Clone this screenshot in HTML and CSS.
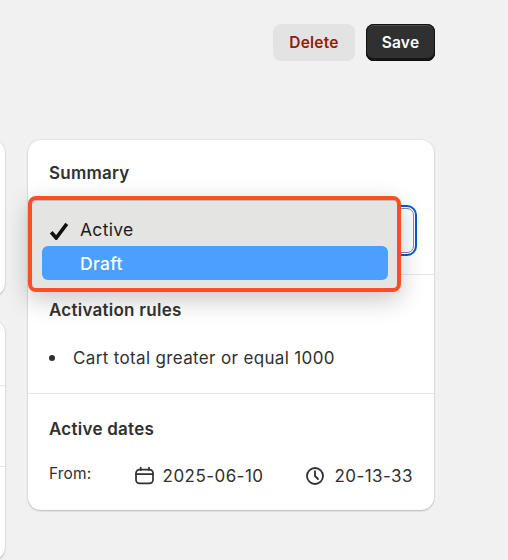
FILE: index.html
```html
<!DOCTYPE html>
<html lang="en">

<head>
  <meta charset="UTF-8">
  <meta name="viewport" content="width=device-width, initial-scale=1.0">
  <title>Discount</title>
  <link rel="stylesheet" href="styles.css">
</head>

<body>

  <div class="actions">
    <button class="btn btn-delete">Delete</button>
    <button class="btn btn-save">Save</button>
  </div>

  <div class="columns">
    <div class="left-col">
      <div class="card left-top"></div>
      <div class="card left-bottom">
        <div class="left-row"></div>
        <div class="left-row"></div>
      </div>
    </div>

    <div class="card summary">
      <div class="section section-status">
        <h2 class="title">Summary</h2>
        <div class="select-ring"></div>

        <!-- open status menu -->
        <div class="menu">
          <div class="menu-item">
            <svg class="check" width="20" height="18" viewBox="0 0 20 18">
              <path d="M2.2 10.2 L7.2 16 L17.8 1.8" fill="none" stroke="#111" stroke-width="3.6" />
            </svg>
            Active
          </div>
          <div class="menu-item menu-item-on">Draft</div>
        </div>
      </div>

      <div class="section section-rules">
        <h2 class="title">Activation rules</h2>
        <ul class="rules">
          <li>Cart total greater or equal 1000</li>
        </ul>
      </div>

      <div class="section section-dates">
        <h2 class="title">Active dates</h2>
        <div class="date-row">
          <span class="from">From:</span>
          <span class="stamp stamp-date">
            <svg width="20" height="20" viewBox="0 0 20 20" fill="none" stroke="#303030" stroke-width="1.7">
              <rect x="2" y="3.6" width="17" height="13.8" rx="3.6" />
              <path d="M2 8.2 H19 M6.7 1.6 V4 M15 1.6 V4" stroke-linecap="round" />
            </svg>
            2025-06-10
          </span>
          <span class="stamp">
            <svg width="20" height="20" viewBox="0 0 20 20" fill="none" stroke="#303030" stroke-width="1.8">
              <circle cx="10" cy="10" r="8" />
              <path d="M10 5.2 V10 L13 13" stroke-linecap="round" stroke-linejoin="round" />
            </svg>
            20-13-33
          </span>
        </div>
      </div>
    </div>
  </div>

</body>

</html>
```

FILE: styles.css
```css
* {
  box-sizing: border-box;
}

body {
  margin: 0;
  height: 560px;
  overflow: hidden;
  background: #f1f1f1;
  font-family: Inter, "Noto Sans", sans-serif;
  color: #303030;
}

.actions {
  display: flex;
  justify-content: flex-end;
  gap: 11px;
  padding: 24px 73px 0 0;
}

.btn {
  height: 37px;
  border: 0;
  border-radius: 8px;
  font-family: inherit;
  font-size: 15.5px;
  font-weight: 600;
  letter-spacing: 0.2px;
}

.btn-delete {
  width: 82px;
  background: #e3e3e3;
  color: #8e1f0b;
}

.btn-save {
  width: 69px;
  background: #303030;
  color: #fff;
  box-shadow: inset 0 0 0 1px #111, inset 0 2px 0 #4d4d4d, inset 0 -3px 0 #161616;
}

.columns {
  display: flex;
  align-items: flex-start;
  gap: 23px;
  margin: 79px 0 0 -95px;
}

.left-col {
  display: flex;
  flex-direction: column;
  gap: 24px;
  width: 100px;
  flex-shrink: 0;
}

.card {
  background: #fff;
  border-radius: 13px;
  box-shadow: 0 1px 2px rgba(0, 0, 0, 0.2), 0 0 0 1px rgba(0, 0, 0, 0.04);
}

.left-top {
  height: 156px;
}

.left-bottom {
  height: 240px;
  padding-top: 65px;
}

.left-row {
  height: 81px;
  border-top: 1px solid #e6e6e6;
}

.summary {
  width: 406px;
  height: 370px;
}

.section {
  position: relative;
  padding: 0 21px;
}

.section-status {
  height: 135px;
  padding-top: 23px;
  border-bottom: 1px solid #e8e8e8;
}

.section-rules {
  height: 119px;
  padding-top: 25px;
  border-bottom: 1px solid #e8e8e8;
}

.section-dates {
  padding-top: 25px;
}

.title {
  margin: 0;
  font-size: 17px;
  line-height: 20px;
  font-weight: 600;
  letter-spacing: 0.25px;
}

/* focus ring of the select, mostly hidden behind the menu */
.select-ring {
  position: absolute;
  top: 68px;
  left: 21px;
  width: 365px;
  height: 45px;
  border: 1px solid #8a8a8a;
  border-radius: 7px;
  outline: 2px solid #005bd3;
  outline-offset: 1px;
}

.menu {
  position: absolute;
  top: 56px;
  left: 0;
  width: 373px;
  height: 96px;
  padding: 14px 9px 0 10px;
  background: #e4e4e2;
  border: 4px solid #fb4d26;
  border-radius: 8px;
  box-shadow: inset 0 1px 0 #bdbdbd, 0 8px 24px rgba(0, 0, 0, 0.22);
}

.menu-item {
  position: relative;
  height: 32px;
  padding-left: 38px;
  font-size: 17.5px;
  line-height: 31px;
  letter-spacing: 0.3px;
  color: #1c1c1c;
}

.menu-item-on {
  height: 34px;
  background: #4b9fff;
  border-radius: 6px;
  color: #fff;
  font-weight: 500;
  line-height: 36px;
}

.check {
  position: absolute;
  left: 7px;
  top: 8px;
}

.rules {
  margin: 28px 0 0;
  padding: 0;
  list-style: none;
  font-size: 17px;
  line-height: 20px;
  letter-spacing: 0.35px;
}

.rules li {
  display: flex;
  align-items: center;
  gap: 18px;
}

.rules li::before {
  content: "";
  width: 6px;
  height: 6px;
  border-radius: 50%;
  background: #303030;
}

.date-row {
  display: flex;
  align-items: center;
  margin-top: 27px;
}

.from {
  width: 85px;
  font-size: 15.5px;
  letter-spacing: 0.15px;
  margin-top: -6px;
}

.stamp {
  display: flex;
  align-items: center;
  gap: 9px;
  letter-spacing: 0.45px;
  white-space: nowrap;
  font-size: 17px;
}

.stamp-date {
  margin-right: 42px;
}
```
